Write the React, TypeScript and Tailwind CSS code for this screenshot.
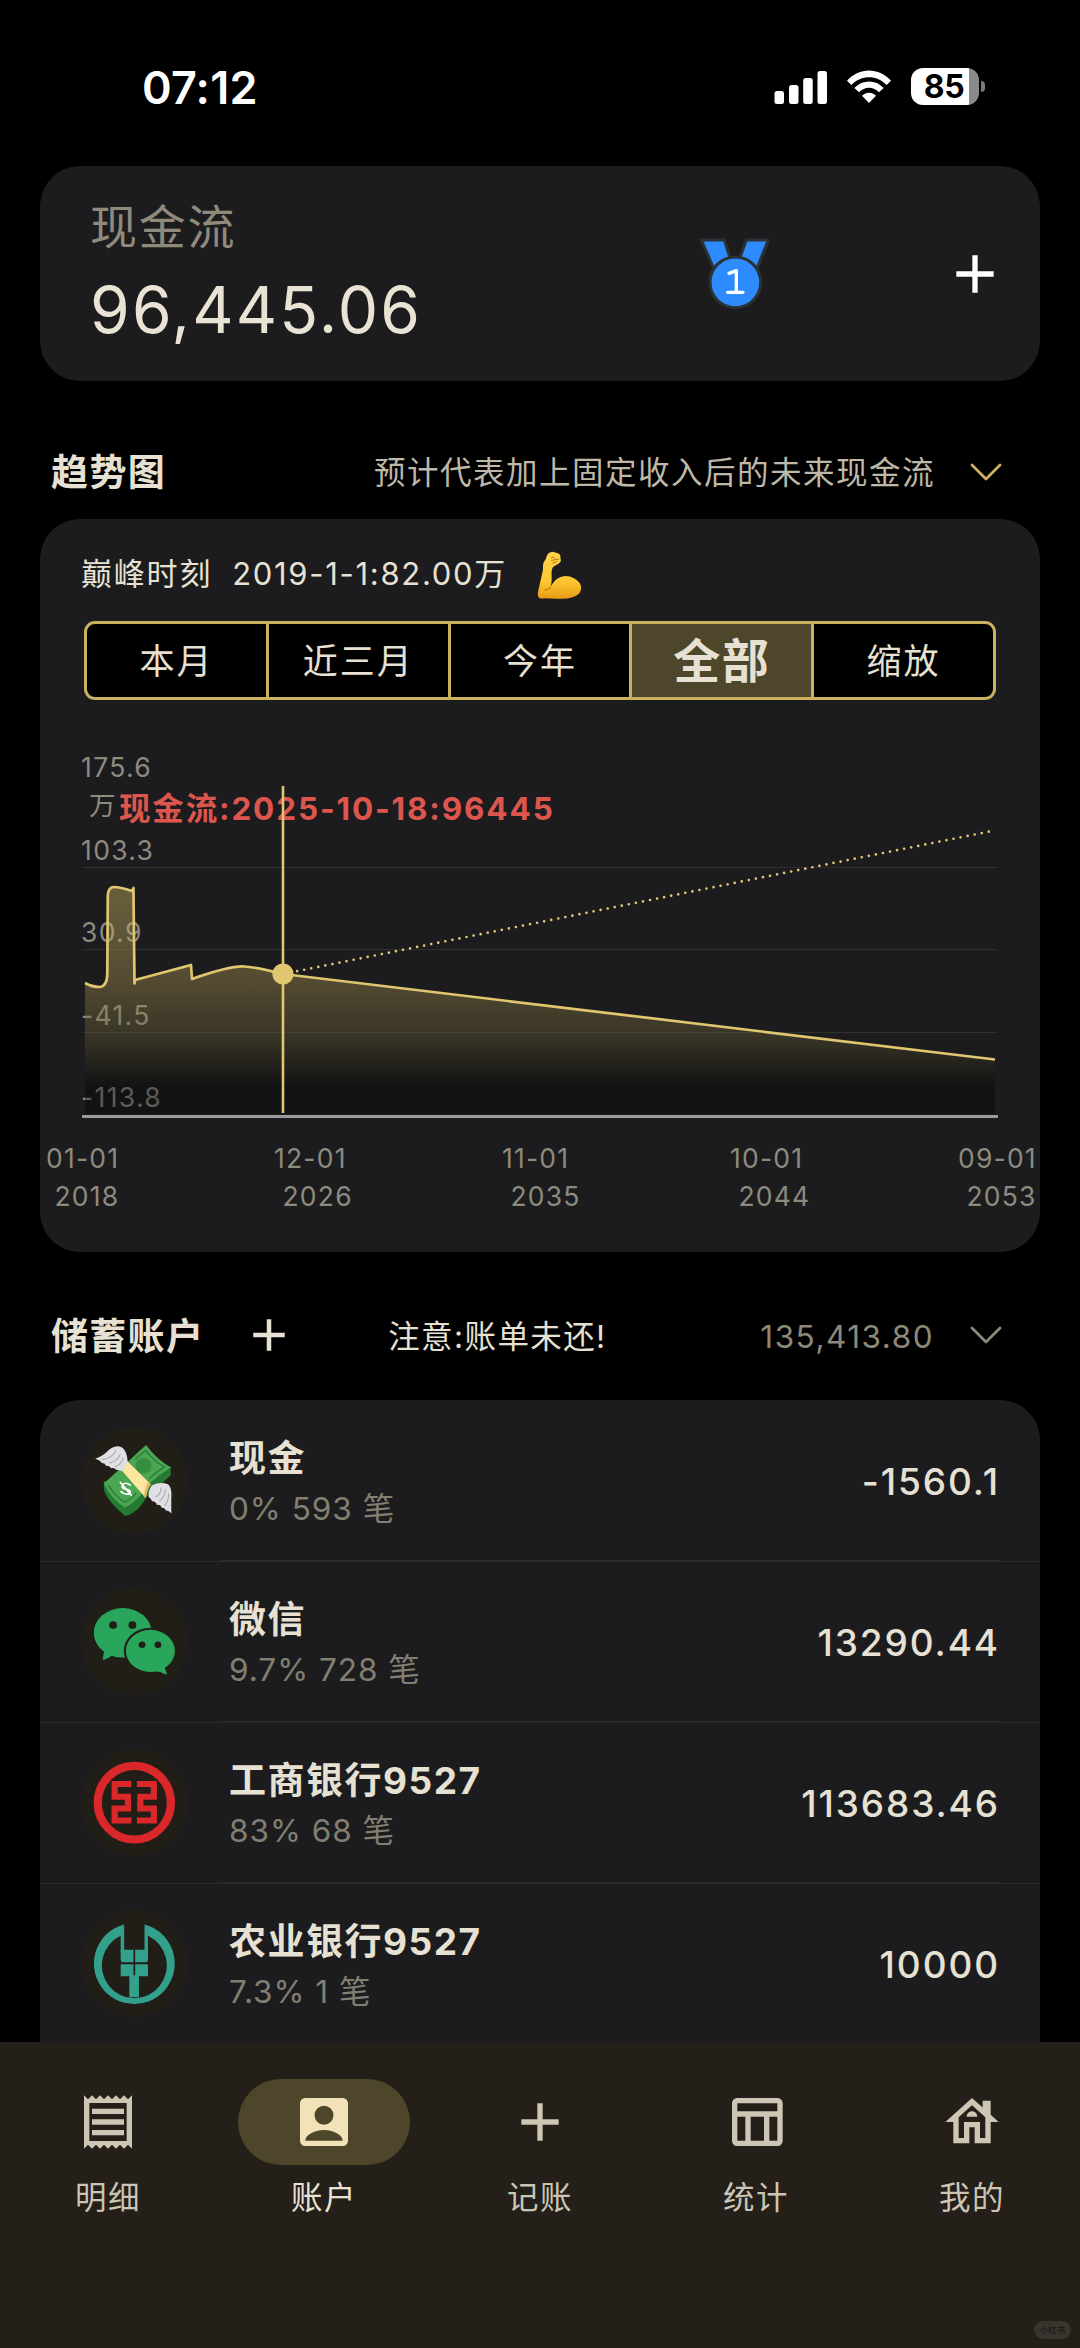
import type { ReactNode } from "react";

function PlusIcon({ size, className }: { size: number; className: string }) {
  return (
    <svg width={size} height={size} viewBox="0 0 24 24" fill="currentColor" className={className}>
      <path d="M19 13h-6v6h-2v-6H5v-2h6V5h2v6h6v2z" />
    </svg>
  );
}

function Chevron({ className }: { className: string }) {
  return (
    <svg width="36" height="22" viewBox="0 0 36 22" fill="none" stroke="currentColor" strokeWidth="2.8" className={className}>
      <path d="M4 4 18 18 32 4" strokeLinecap="round" strokeLinejoin="round" />
    </svg>
  );
}

function StatusBar() {
  return (
    <header className="flex h-[166px] shrink-0 items-start justify-between pl-[142px] pr-[95px] pt-[61px] text-white">
      <span className="text-[45px] font-semibold leading-[54px] tracking-[0.2px]">07:12</span>
      <div className="flex items-center pt-[7px]">
        <svg width="54" height="36" viewBox="0 0 54 36" fill="white">
          <rect x="0.5" y="22" width="9.5" height="13" rx="2.5" />
          <rect x="15" y="16" width="9.5" height="19" rx="2.5" />
          <rect x="29.2" y="9" width="9.5" height="26" rx="2.5" />
          <rect x="43.5" y="2" width="9.5" height="33" rx="2.5" />
        </svg>
        <svg width="46" height="36" viewBox="0 0 138 108" className="ml-[18px]" fill="white">
          <path d="M3 35C40-6 98-6 135 35L122 48C92 17 46 17 16 48Z" />
          <path d="M25 57C49 31 89 31 113 57L99 70C82 52 56 52 39 70Z" />
          <path d="M48 80C60 68 78 68 90 80L69 102Z" />
        </svg>
        <div className="ml-[19.5px] flex h-[37px] w-[68px] items-center justify-center rounded-[12px] bg-[linear-gradient(to_right,#fff_58px,#8a8a8a_58px)] pr-[2px] text-black">
          <span className="text-[32px] font-bold leading-[36px] tracking-[-0.5px]">85</span>
        </div>
        <div className="ml-[2px] h-[11px] w-[4px] rounded-r-full bg-[#7a7a7a]" />
      </div>
    </header>
  );
}

function Medal() {
  return (
    <svg width="72" height="76" viewBox="114 78 216 228" fill="#2e8bff" stroke="#2b3234" strokeWidth="9">
      <path d="M127 90H196L215 150 166 180Z" />
      <path d="M262 90H328L292 180 240 150Z" />
      <circle cx="229" cy="217" r="76" />
      <path d="M210 190 232 182V247M206 247H252" fill="none" stroke="white" strokeWidth="10" strokeLinecap="round" strokeLinejoin="round" />
    </svg>
  );
}

function Biceps() {
  return (
    <svg width="50" height="52" viewBox="50 35 150 156">
      <defs>
        <linearGradient id="skin" x1="0" y1="0" x2="0" y2="1">
          <stop offset="0" stopColor="#ffd54a" />
          <stop offset="0.65" stopColor="#fdc52f" />
          <stop offset="1" stopColor="#e79a16" />
        </linearGradient>
      </defs>
      <path
        d="M92 46 104 43 122 49Q128 53 126 60L128 70Q126 76 119 80L105 88Q98 95 100 117Q101 133 97 149Q101 139 109 131Q121 117 142 116Q168 117 184 137Q194 154 182 169Q165 184 130 184Q104 185 80 183Q61 186 59 176Q57 169 61 155L71 111Q75 98 74 86Q73 78 82 66Q84 52 92 46Z"
        fill="url(#skin)"
      />
      <path d="M97 151Q89 157 80 158M99 61Q105 57 110 62M100 69 122 65M103 77Q111 77 116 72" fill="none" stroke="#b97812" strokeWidth="3" strokeLinecap="round" />
    </svg>
  );
}

const ticks = [
  { y: 776.5, text: "175.6" },
  { y: 859.5, text: "103.3" },
  { y: 942, text: "30.9" },
  { y: 1025, text: "-41.5" },
  { y: 1107, text: "-113.8" },
];

const cashLine =
  "M85 983Q92 987 100 987Q107 986 107.3 974L107.8 895Q108.5 887 114 887Q120 887 132 891L133.5 888V893L134.5 983.5L135 980L191 965L192 979C215 971 235 966 244 966.5C256 967 270 971 283 974L995 1059.5";

function TrendChart() {
  return (
    <svg width="1000" height="400" viewBox="40 728 1000 400" className="block">
      <defs>
        <linearGradient id="area" gradientUnits="userSpaceOnUse" x1="0" y1="887" x2="0" y2="1114">
          <stop offset="0" stopColor="#ddc36a" stopOpacity="0.4" />
          <stop offset="0.4" stopColor="#ab924f" stopOpacity="0.4" />
          <stop offset="0.65" stopColor="#6e6337" stopOpacity="0.36" />
          <stop offset="0.88" stopColor="#000" stopOpacity="0.36" />
          <stop offset="1" stopColor="#000" stopOpacity="0.32" />
        </linearGradient>
      </defs>
      <g stroke="#2f2f2e" strokeWidth="1.2">
        <path d="M82 867.5H997M82 949.5H997M82 1032.5H997" />
      </g>
      <g fill="#8d8a7e" fontSize="26.5" letterSpacing="1.35">
        {ticks.map((t) => (
          <text key={t.text} x="81" y={t.y}>{t.text}</text>
        ))}
        <text x="89" y="815">万</text>
      </g>
      <path d={cashLine + "V1114H85Z"} fill="url(#area)" />
      <path d="M82 1116.5H998" stroke="#9b9b9b" strokeWidth="3" />
      <path d="M283 974 992 831" stroke="#e0c872" strokeWidth="2.7" strokeLinecap="round" strokeDasharray="0 7.2" />
      <path d={cashLine} fill="none" stroke="#dfc66f" strokeWidth="2.7" strokeLinejoin="round" />
      <text x="119" y="819.5" fill="#dc564e" fontSize="31.5" fontWeight="700" letterSpacing="1.85">
        现金流:2025-10-18:96445
      </text>
      <path d="M283 786V1113" stroke="#dfc66f" strokeWidth="2.6" />
      <circle cx="283" cy="974" r="10.6" fill="#dfc66f" />
    </svg>
  );
}

const ranges = ["本月", "近三月", "今年", "全部", "缩放"];
const dates = [
  ["01-01", "2018"],
  ["12-01", "2026"],
  ["11-01", "2035"],
  ["10-01", "2044"],
  ["09-01", "2053"],
];

function TrendCard() {
  return (
    <section className="h-[733px] shrink-0 rounded-[40px] bg-[#1c1c1e]">
      <div className="flex h-[102px] items-center pl-[41px] pt-[9px] text-[31px] text-[#e6e1d3]">
        <span className="tracking-[1.8px]">巅峰时刻</span>
        <span className="ml-[20px] tracking-[1.7px]">2019-1-1:82.00万</span>
        <span className="ml-[28px]"><Biceps /></span>
      </div>
      <div className="ml-[44px] flex h-[79px] w-[912px] overflow-hidden rounded-[11px] border-3 border-[#cdb25d] bg-black text-[#e6e1d3]">
        {ranges.map((r, i) => (
          <div
            key={r}
            className={
              "flex flex-1 items-center justify-center border-[#cdb25d] pt-[2px] " +
              (i > 0 ? "border-l-3 " : "") +
              (r === "全部" ? "bg-[#4e462a] text-[47px] font-bold tracking-[1.5px]" : "text-[35px] tracking-[2px]")
            }
          >
            {r}
          </div>
        ))}
      </div>
      <div className="pt-[28px]">
        <TrendChart />
      </div>
      <div className="ml-[6px] mt-[12px] grid w-[1140px] grid-cols-5 text-[26.5px] leading-[37.5px] tracking-[1.2px] text-[#8d8a7e]">
        {dates.map(([day, year]) => (
          <div key={year}>
            <div>{day}</div>
            <div className="pl-[8.5px]">{year}</div>
          </div>
        ))}
      </div>
    </section>
  );
}

function CashLogo() {
  return (
    <svg viewBox="236 501 310 320" preserveAspectRatio="none" className="size-full">
      <path d="M302 664 303 690Q312 722 364 767Q374 766 385 758Q410 744 424 712L496 646V618L420 640Z" fill="#257a32" />
      <path d="M425 555Q405 572 385 592L302 670Q322 715 363 742Q388 730 408 706Q430 664 496 622Q455 598 425 555Z" fill="#4aa653" />
      <path d="M423 571 392 598 M315 675Q335 708 362 726Q380 718 396 698M423 571Q447 604 478 621Q450 638 434 656" fill="none" stroke="#2c7d38" strokeWidth="4" />
      <circle cx="417" cy="617" r="23" fill="#368f41" />
      <path d="M379 675Q364 664 357 674Q351 685 366 687Q384 690 377 699Q366 707 352 694M350 667 382 705" fill="none" stroke="white" strokeWidth="5" strokeLinecap="round" />
      <path d="M369 602 438 672Q426 688 424 714L356 633Q363 622 369 602Z" fill="#fde6a0" />
      <path d="M438 672Q426 688 424 714L418 707Q421 685 430 665Z" fill="#f2b35e" />
      <path d="M277 596Q300 588 318 568Q342 552 356 563Q370 575 371 604Q362 625 356 633Q344 629 337 629Q336 623 324 624Q319 617 307 616Q306 609 296 609Q294 602 277 596Z" fill="#e0e0e4" />
      <path d="M498 760Q497 735 498 698Q497 680 488 672Q465 664 441 676Q430 692 432 710Q440 716 442 723Q452 722 456 734Q466 731 470 743Q478 740 482 751Q488 748 498 760Z" fill="#e0e0e4" />
      <path d="M296 599Q328 594 338 570M318 609Q342 604 350 582M334 620Q352 614 359 594M451 710Q468 704 468 682M463 723Q480 710 480 688M478 737Q490 724 490 700" fill="none" stroke="#a5a6ad" strokeWidth="3" />
    </svg>
  );
}

function WechatLogo() {
  return (
    <svg viewBox="236 986 310 320" preserveAspectRatio="none" className="size-full" fill="#2aa65c">
      <ellipse cx="357" cy="1120" rx="84" ry="74" />
      <path d="M304 1166 299 1200Q304 1202 324 1189L345 1190Z" />
      <ellipse cx="437" cy="1174" rx="77" ry="69" fill="#211e17" />
      <ellipse cx="437" cy="1174" rx="71" ry="63" />
      <path d="M484 1215 478 1222 485 1244Q480 1246 466 1237L440 1234Z" />
      <g fill="#211e17">
        <circle cx="329" cy="1097" r="11.5" />
        <circle cx="385" cy="1097" r="11.5" />
        <circle cx="413" cy="1156" r="9.8" />
        <circle cx="459" cy="1156" r="9.8" />
      </g>
    </svg>
  );
}

function IcbcLogo() {
  return (
    <svg viewBox="236 148 310 320" preserveAspectRatio="none" className="size-full" fill="none" stroke="#d9272a">
      <ellipse cx="390.5" cy="308.5" rx="106" ry="110" strokeWidth="24" />
      <path d="M382 253H333.5V291H372V326H333.5V362H382M398 253H447V291H408V326H447V362H398" strokeWidth="18" />
    </svg>
  );
}

function AbcLogo() {
  return (
    <svg viewBox="236 631 310 320" preserveAspectRatio="none" className="size-full" fill="#33a08c">
      <path d="M361 674A117 121 0 1 0 420 674L430 708A94 98 0 1 1 351 708Z" />
      <path d="M361 674V760H351V702ZM420 674V760H430V702Z" />
      <path d="M351 750H388V787H356Q351 787 351 780ZM393 750H430V780Q430 787 425 787H393ZM351 793H388V829H351ZM393 793H430V829H393ZM376 826H404V892H376Z" />
    </svg>
  );
}

type Account = { name: string; detail: string; amount: string; logo: ReactNode };

const accounts: Account[] = [
  { name: "现金", detail: "0% 593 笔", amount: "-1560.1", logo: <CashLogo /> },
  { name: "微信", detail: "9.7% 728 笔", amount: "13290.44", logo: <WechatLogo /> },
  { name: "工商银行9527", detail: "83% 68 笔", amount: "113683.46", logo: <IcbcLogo /> },
  { name: "农业银行9527", detail: "7.3% 1 笔", amount: "10000", logo: <AbcLogo /> },
];

function AccountRow({ account }: { account: Account }) {
  return (
    <div>
      <div className="flex h-[159px] items-center pl-[41px] pr-[40px]">
        <div className="size-[107px] rounded-full bg-[#211e17]">{account.logo}</div>
        <div className="ml-[41px] flex-1 pt-[7px]">
          <div className="text-[37px] font-bold leading-[50px] tracking-[1.5px] text-[#e6e1d3]">{account.name}</div>
          <div className="text-[31.5px] leading-[50px] tracking-[1px] text-[#827f72]">{account.detail}</div>
        </div>
        <div className="pt-[2px] text-[37px] font-medium tracking-[1.9px] text-[#e6e1d3]">{account.amount}</div>
      </div>
      <div className="flex h-[2px] items-end">
        <div className="h-px w-[180px] bg-[#2c2c2d]" />
        <div className="h-[2px] flex-1 bg-[#2a2a2b]" />
        <div className="h-px w-[40px] bg-[#2c2c2d]" />
      </div>
    </div>
  );
}

const tabs = [
  {
    label: "明细",
    path: "M19.5 3.5 18 2l-1.5 1.5L15 2l-1.5 1.5L12 2l-1.5 1.5L9 2 7.5 3.5 6 2 4.5 3.5 3 2v20l1.5-1.5L6 22l1.5-1.5L9 22l1.5-1.5L12 22l1.5-1.5L15 22l1.5-1.5L18 22l1.5-1.5L21 22V2l-1.5 1.5zM19 19.09H5V4.91h14v14.18zM6 15h12v2H6zm0-4h12v2H6zm0-4h12v2H6z",
  },
  {
    label: "账户",
    path: "M5 3h14a2 2 0 0 1 2 2v14a2 2 0 0 1-2 2H5a2 2 0 0 1-2-2V5a2 2 0 0 1 2-2zM12 5.9a3.55 3.55 0 1 0 0 7.1 3.55 3.55 0 0 0 0-7.1zM12 15C9 15 5 16.6 5 19h14c0-2.4-4-4-7-4z",
  },
  { label: "记账", path: "M19 13h-6v6h-2v-6H5v-2h6V5h2v6h6v2z" },
  {
    label: "统计",
    path: "M20 3H5c-1.1 0-2 .9-2 2v14c0 1.1.9 2 2 2h15c1.1 0 2-.9 2-2V5c0-1.1-.9-2-2-2zm0 2v3H5V5h15zm-5 14h-5v-9h5v9zM5 10h3v9H5v-9zm12 9v-9h3v9h-3z",
  },
  {
    label: "我的",
    path: "M19 9.3V4h-3v2.6L12 3 2 12h3v8h6v-6h2v6h6v-8h3l-3-2.7zM17 18h-2v-6H9v6H7v-7.81l5-4.5 5 4.5V18zM10 10h4c0-1.1-.9-2-2-2s-2 .9-2 2z",
  },
];

function NavBar() {
  return (
    <nav className="relative grid h-[306px] shrink-0 grid-cols-5 bg-[#241f19] pt-[37px]">
      {tabs.map((t) => {
        const active = t.label === "账户";
        return (
          <div key={t.label} className="flex flex-col items-center">
            <div
              className={
                "flex h-[86px] w-[172px] items-center justify-center rounded-full " +
                (active ? "bg-[#4e462a] text-[#f1e2b8]" : "text-[#cdc6b4]")
              }
            >
              <svg width="64" height="64" viewBox="0 0 24 24" fill="currentColor" fillRule="evenodd">
                <path d={t.path} />
              </svg>
            </div>
            <div
              className={
                "mt-[9px] text-[31.5px] leading-[48px] tracking-[1.5px] " + (active ? "text-[#e9e3d6]" : "text-[#cbc5b5]")
              }
            >
              {t.label}
            </div>
          </div>
        );
      })}
      <div className="absolute bottom-[9px] right-[9px] flex h-[18px] w-[37px] items-center justify-center rounded-full bg-[#38352f] text-[8.5px] font-bold text-[#1f1c17]">
        小红书
      </div>
    </nav>
  );
}

export default function App() {
  return (
    <div className="flex h-[2348px] w-[1080px] flex-col overflow-hidden bg-black font-[Inter,'Noto_Sans_CJK_SC',sans-serif]">
      <StatusBar />
      <main className="flex min-h-0 flex-1 flex-col overflow-hidden px-[40px]">
        <section className="flex h-[215px] shrink-0 items-center rounded-[40px] bg-[#1c1c1e] pl-[50px] pr-[33px]">
          <div className="w-[607px]">
            <div className="-mt-[2px] text-[47px] leading-[60px] tracking-[1.8px] text-[#8f8b7c]">现金流</div>
            <div className="mt-[15px] text-[64px] leading-[76px] tracking-[2.2px] text-[#e9e3d4]">96,445.06</div>
          </div>
          <Medal />
          <PlusIcon size={64} className="ml-auto text-white" />
        </section>

        <div className="mt-[43px] flex h-[95px] shrink-0 items-center pl-[11px] pr-[36px]">
          <h2 className="pt-[2px] text-[37px] font-bold tracking-[1.4px] text-[#e6e1d3]">趋势图</h2>
          <span className="ml-auto pt-[2px] text-[31.5px] tracking-[1.5px] text-[#bdb8a8]">预计代表加上固定收入后的未来现金流</span>
          <Chevron className="ml-[33px] text-[#cdb25d]" />
        </div>
        <TrendCard />

        <div className="mt-[18px] flex h-[130px] shrink-0 items-center pl-[11px] pr-[36px]">
          <h2 className="pt-[3px] text-[37px] font-bold tracking-[1.3px] text-[#e6e1d3]">储蓄账户</h2>
          <PlusIcon size={54} className="ml-[38px] text-[#e6e1d3]" />
          <span className="ml-[92px] pt-[3px] text-[31.5px] tracking-[1.4px] text-[#e6e1d3]">注意:账单未还!</span>
          <span className="ml-auto pt-[3px] text-[31.5px] tracking-[1.5px] text-[#8d897a]">135,413.80</span>
          <Chevron className="ml-[34px] text-[#8d897a]" />
        </div>
        <section className="min-h-0 flex-1 overflow-hidden rounded-t-[40px] bg-[#1c1c1e] pt-px">
          {accounts.map((a) => (
            <AccountRow key={a.name} account={a} />
          ))}
        </section>
      </main>
      <NavBar />
    </div>
  );
}
